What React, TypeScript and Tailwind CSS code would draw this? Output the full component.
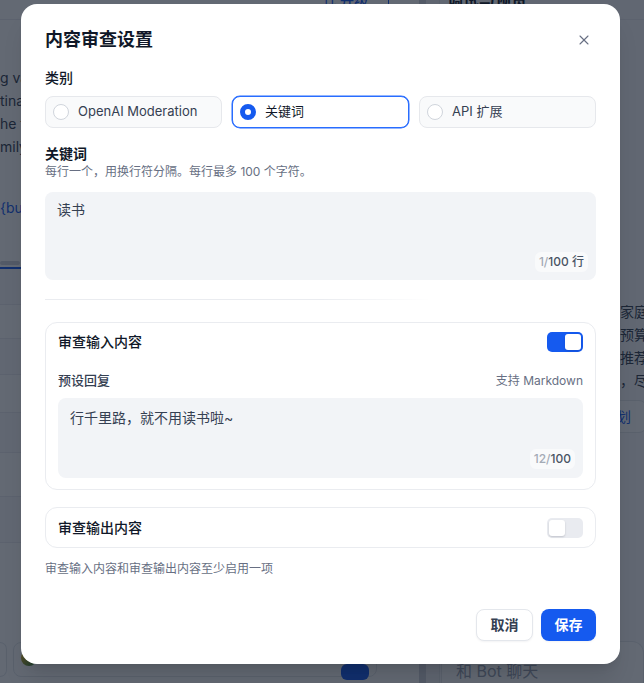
import React from "react";
import { X } from "lucide-react";

const FONT = "font-['Inter','Noto_Sans_CJK_SC',sans-serif]";

function Radio({ checked }: { checked?: boolean }) {
  return checked ? (
    <span className="block h-4 w-4 shrink-0 rounded-full border-[5px] border-[#155aef] bg-white" />
  ) : (
    <span className="block h-4 w-4 shrink-0 rounded-full border border-[#d0d5dc] bg-white" />
  );
}

function Toggle({ on }: { on?: boolean }) {
  return on ? (
    <div className="flex h-5 w-9 items-center justify-end rounded-[5px] bg-[#155aef] p-0.5">
      <div className="h-4 w-4 rounded-[3px] bg-white shadow-sm" />
    </div>
  ) : (
    <div className="flex h-5 w-9 items-center justify-start rounded-[5px] bg-[#e9ebf0] p-0.5">
      <div className="h-4 w-4 rounded-[3px] bg-white shadow-[0_1px_2px_rgba(16,24,40,0.18)]" />
    </div>
  );
}

function Background() {
  return (
    <div className="flex h-full">
      {/* left orchestration column */}
      <div className="flex w-[419px] shrink-0 flex-col bg-white">
        <div className="flex h-5 items-start justify-end gap-5 border-b border-[#eaecf0] pr-[30px]">
          <span className="-mt-[9px] text-sm font-medium text-[#155aef]">⇅ 升级</span>
          <span className="-mt-[6px] h-3 w-px bg-[#155aef]" />
        </div>
        <div className="flex flex-col whitespace-nowrap pt-[46px] text-sm leading-[23px] text-[#354052]">
          <p>g variables to describe the trip</p>
          <p>tination for the whole family</p>
          <p>he travel budget and dates</p>
          <p>mily members and preferences</p>
          <p className="mt-[38px] text-[#155aef]">{"{bucket_list}}"}</p>
        </div>
        <div className="mt-[42px] h-1 w-5 rounded-full bg-[#d0d5dc]" />
        <div className="mt-0.5 h-0.5 w-full bg-[#155aef]" />
        <div className="flex flex-1 flex-col">
          <div className="h-[36px] border-b border-[#eaecf0] bg-[#f9fafb]" />
          <div className="h-[34px] border-b border-[#eaecf0]" />
          <div className="h-[36px] border-b border-[#eaecf0] bg-[#f9fafb]" />
          <div className="h-[38px] border-b border-[#eaecf0]" />
          <div className="h-[40px] border-b border-[#eaecf0] bg-[#f9fafb]" />
          <div className="h-[44px] border-b border-[#eaecf0]" />
          <div className="h-[46px] border-b border-[#eaecf0] bg-[#f9fafb]" />
        </div>
        <div className="mb-[6px] flex h-[35px] gap-[6px]">
          <div className="w-[7px] rounded-r-lg border border-l-0 border-[#e4e7ec] bg-white" />
          <div className="flex w-[364px] items-start justify-between rounded-lg border border-[#e4e7ec] bg-white pl-[7px] pr-[7px] pt-[7px]">
            <span className="block h-4 w-4 rounded-full bg-linear-to-br from-[#eab308] to-[#15803d]" />
            <span className="mt-[14px] block h-4 w-[28px] rounded-md bg-[#155aef]" />
          </div>
        </div>
      </div>
      {/* separator */}
      <div className="w-[7px] shrink-0 bg-[#d0d5dc]" />
      <div className="w-[14px] shrink-0 border-r border-[#e4e7ec] bg-[#f2f4f7]" />
      {/* right debug panel */}
      <div className="flex w-[204px] shrink-0 flex-col overflow-hidden bg-[#f9fafb]">
        <div className="h-5 border-b border-[#eaecf0]">
          <div className="-mt-3 whitespace-nowrap pl-[7px] text-base font-semibold leading-6 text-[#101828]">调试与预览</div>
        </div>
        <div className="mt-[280px] whitespace-nowrap pl-[26px] text-sm leading-[23px] text-[#354052]">
          <p>我为你准备了一份适合的家庭出行方案</p>
          <p>行程安排也兼顾到了你的预算情况</p>
          <p>以下为几个热门的目的地推荐给你</p>
          <p>如有需求请随时告诉我哦，尽量满足你</p>
        </div>
        <div className="ml-[95px] mt-[8px] flex h-[33px] w-[112px] items-center whitespace-nowrap rounded-lg border border-[#e4e7ec] bg-white px-[11px] text-sm text-[#155aef]">
          查看详细计划
        </div>
        <div className="ml-px mt-auto h-[42px] rounded-t-xl border border-b-0 border-[#e4e7ec] bg-white pl-[14px] pt-[17px] text-base leading-6 whitespace-nowrap text-[#98a2b2]">
          和 Bot 聊天
        </div>
      </div>
    </div>
  );
}

export default function App() {
  return (
    <div className={`relative h-[683px] w-[644px] overflow-hidden bg-[#f9fafb] ${FONT}`}>
      <Background />
      <div className="absolute inset-0 bg-[#101828]/65" />
      <div className="absolute left-[21px] top-[4px] w-[599px] rounded-2xl bg-white px-6 pb-[23px] pt-[22px] shadow-xl">
        <div className="flex h-7 items-center justify-between">
          <h2 className="text-lg font-semibold leading-7 text-[#101828]">内容审查设置</h2>
          <button className="flex h-6 w-6 items-center justify-center text-[#676f83]">
            <X size={16} strokeWidth={1.6} />
          </button>
        </div>

        <div className="mt-[14px] text-sm font-medium leading-5 text-[#101828]">类别</div>
        <div className="mt-2 grid grid-cols-3 gap-2.5">
          <div className="flex h-8 items-center gap-[9px] rounded-lg border border-[#e6e8ec] bg-[#f9fafb] pl-[7px] text-[13px] text-[#354052]">
            <Radio />
            OpenAI Moderation
          </div>
          <div className="flex h-8 items-center gap-[9px] rounded-lg border border-[#296dff] bg-white pl-[7px] text-[13px] text-[#101828] shadow-[0_0_0_0.5px_#296dff]">
            <Radio checked />
            关键词
          </div>
          <div className="flex h-8 items-center gap-[9px] rounded-lg border border-[#e6e8ec] bg-[#f9fafb] pl-[7px] text-[13px] text-[#354052]">
            <Radio />
            API 扩展
          </div>
        </div>

        <div className="mt-[17px] text-sm font-semibold leading-[18px] text-[#101828]">关键词</div>
        <div className="text-xs leading-[18px] text-[#676f83]">每行一个，用换行符分隔。每行最多 100 个字符。</div>
        <div className="mt-[11px] flex h-[88px] flex-col justify-between rounded-lg bg-[#f2f4f7] pb-2 pl-3 pr-2 pt-2">
          <div className="text-sm leading-5 text-[#354052]">读书</div>
          <div className="flex justify-end">
            <span className="flex h-5 items-center rounded-md bg-[#f9fafb] px-1 text-xs font-medium">
              <span className="text-[#a4abb6]">1/</span>
              <span className="text-[#495464]">100 行</span>
            </span>
          </div>
        </div>

        <div className="mt-[19px] h-px bg-linear-to-r from-[#eaecf0] via-[#eaecf0] via-50% to-white/0 to-70%" />

        <div className="mt-[22px] rounded-xl border border-[#eaecf0] px-3 pb-[11px] pt-[9px]">
          <div className="flex h-5 items-center justify-between">
            <span className="text-sm font-medium leading-5 text-[#101828]">审查输入内容</span>
            <Toggle on />
          </div>
          <div className="mt-[19px] flex h-5 items-center justify-between">
            <span className="text-[13px] font-medium text-[#354052]">预设回复</span>
            <span className="text-xs text-[#676f83]">支持 Markdown</span>
          </div>
          <div className="mt-[7px] flex h-20 flex-col justify-between rounded-lg bg-[#f2f4f7] pb-[9px] pl-3 pr-2 pt-[10px]">
            <div className="text-sm leading-5 text-[#354052]">行千里路，就不用读书啦~</div>
            <div className="flex justify-end">
              <span className="flex h-5 items-center rounded-md bg-[#f9fafb] px-1 text-xs font-medium">
                <span className="text-[#a4abb6]">12/</span>
                <span className="text-[#495464]">100</span>
              </span>
            </div>
          </div>
        </div>

        <div className="mt-[17px] rounded-xl border border-[#eaecf0] px-3 pb-[9px] pt-[10px]">
          <div className="flex h-5 items-center justify-between">
            <span className="text-sm font-medium leading-5 text-[#101828]">审查输出内容</span>
            <Toggle />
          </div>
        </div>

        <div className="mt-[13px] text-xs leading-4 text-[#676f83]">审查输入内容和审查输出内容至少启用一项</div>

        <div className="mt-8 flex justify-end gap-2">
          <button className="h-8 rounded-lg border border-[#e4e7ec] bg-white px-[13.5px] text-sm font-semibold text-[#354052] shadow-[0_1px_2px_rgba(16,24,40,0.05)]">
            取消
          </button>
          <button className="h-8 rounded-lg bg-[#155aef] px-[13.5px] text-sm font-semibold text-white shadow-[0_1px_2px_rgba(16,24,40,0.05)]">
            保存
          </button>
        </div>
      </div>
    </div>
  );
}
